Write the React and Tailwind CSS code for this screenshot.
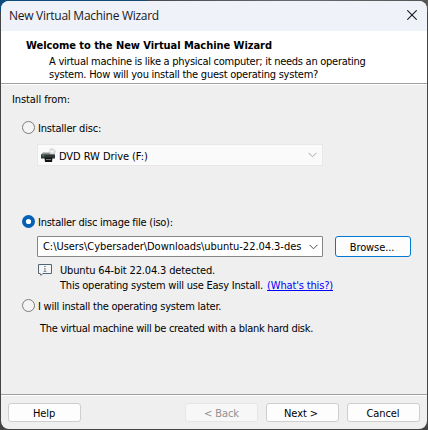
import React from "react";

function Radio({ checked }) {
  return (
    <svg className="mr-[3px] block h-[13px] w-[13px] shrink-0" viewBox="0 0 13 13">
      {checked ? (
        <>
          <circle cx="6.5" cy="6.5" r="6.5" fill="#0560b6" />
          <circle cx="6.5" cy="6.5" r="2.6" fill="#fff" />
        </>
      ) : (
        <circle cx="6.5" cy="6.5" r="6" fill="#f4f4f4" stroke="#7c7c7c" />
      )}
    </svg>
  );
}

function Chevron({ color }) {
  return (
    <svg className="block h-[6px] w-[9px] shrink-0" viewBox="0 0 9 6">
      <path d="M.5 .8L4.5 4.8L8.5 .8" fill="none" stroke={color} strokeWidth="1" />
    </svg>
  );
}

function DriveIcon() {
  return (
    <svg className="block h-[15px] w-[15px] shrink-0" viewBox="0 0 15 15">
      <circle cx="11.2" cy="3.8" r="3.5" fill="#d5d9db" />
      <path d="M8 2.5L11.2 3.8L13.5 1.2" fill="none" stroke="#f1f4f5" strokeWidth="1.2" />
      <circle cx="11.2" cy="3.8" r=".9" fill="#fff" />
      <path d="M2 4.5H8L10 6.5H14V8H0V6.5z" fill="#8b8e8f" />
      <rect y="6.5" width="14" height="4" rx=".6" fill="#303434" />
      <rect x="1.5" y="7" width="1.6" height="1.5" fill="#28a839" />
      <path d="M3.5 9.5H11.5L11 14H4z" fill="#111415" />
      <path d="M5 11.5H10" stroke="#737878" strokeWidth="1" />
    </svg>
  );
}

function InfoIcon() {
  return (
    <svg className="block h-[13px] w-[14px] shrink-0" viewBox="0 0 14 13">
      <path d="M.5 .5H13.5V9.5H4.8L3 11.4L2.2 9.5H.5z" fill="#f3f5f6" stroke="#536675" />
      <path d="M6 2.5H8M6 4.5H7M7 4V7.5M5.5 7.5H8.5" fill="none" stroke="#8c979e" strokeWidth="1.2" />
    </svg>
  );
}

function Button({ className = "", children }) {
  return (
    <button
      className={
        "flex shrink-0 items-center justify-center rounded-[3px] border pt-[2px] whitespace-pre tracking-[-0.1px] " +
        className
      }
    >
      {children}
    </button>
  );
}

export default function App() {
  return (
    <div className="h-[430px] w-[428px] overflow-hidden bg-[#444444] bg-[linear-gradient(90deg,#0d4a7d_0px,#174a73_145px,#484850_150px,#6a6a70_300px,#555555_428px)] bg-[length:428px_12px] bg-no-repeat p-px font-['DejaVu_Sans_Condensed','DejaVu_Sans',sans-serif] text-[11px] leading-[13px] text-black [font-stretch:condensed]">
      <div className="flex h-[428px] w-[426px] flex-col overflow-hidden rounded-[8px] bg-[#efefef] whitespace-nowrap">
        <header className="flex h-[30px] shrink-0 items-center justify-between bg-[#f0f2f9] pr-[10px] pb-[2px] pl-2">
          <span className="font-['Open_Sans',sans-serif] text-[12px] tracking-[-0.28px] text-[#191919] [font-stretch:normal]">
            New Virtual Machine Wizard
          </span>
          <svg className="block h-[10px] w-[10px]" viewBox="0 0 10 10">
            <path d="M.3 .3L9.7 9.7M9.7 .3L.3 9.7" stroke="#1b1b1b" strokeWidth="1.1" />
          </svg>
        </header>
        <section className="h-[52px] shrink-0 bg-white pt-[8px] pl-[25px]">
          <h1 className="font-bold tracking-[-0.05px]">Welcome to the New Virtual Machine Wizard</h1>
          <p className="mt-[3px] pl-[23px]">
            <span className="tracking-[-0.265px]">A virtual machine is like a physical computer; it needs an operating</span>
            <br />
            <span className="tracking-[-0.24px]">system. How will you install the guest operating system?</span>
          </p>
        </section>
        <div className="h-[2px] shrink-0 border-t border-[#a0a0a0] bg-white" />

        <main className="flex h-[309px] shrink-0 flex-col">
          <p className="mt-2 ml-[11px] tracking-[-0.1px]">Install from:</p>
          <label className="mt-[15px] ml-[21px] flex h-[13px] items-center">
            <Radio />
            <span className="pt-[2px] tracking-[-0.2px]">Installer disc:</span>
          </label>
          <div className="mt-[10px] ml-9 flex h-[22px] w-[286px] items-center border border-[#e8e8e8] bg-[#fafafa] pr-[5px] pl-[3px]">
            <DriveIcon />
            <span className="ml-[3px] grow pt-[2px] tracking-[-0.06px]">DVD RW Drive (F:)</span>
            <Chevron color="#a7a7a7" />
          </div>
          <label className="mt-[49px] ml-[21px] flex h-[13px] items-center">
            <Radio checked />
            <span className="pt-[2px] tracking-[-0.26px]">Installer disc image file (iso):</span>
          </label>
          <div className="mt-2 ml-9 flex h-[21px]">
            <div className="flex w-[286px] items-center rounded-[1px] border border-[#868686] bg-white pr-1 pl-[5px]">
              <span className="w-[259px] overflow-hidden tracking-[-0.04px]">
                C:\Users\Cybersader\Downloads\ubuntu-22.04.3-des
              </span>
              <span className="ml-auto">
                <Chevron color="#505050" />
              </span>
            </div>
            <Button className="ml-3 w-[76px] border-[#0078d4] bg-[#fdfdfd] pr-[2px]">Browse...</Button>
          </div>
          <div className="mt-[6px] ml-[37px] flex h-[30px] pt-px">
            <InfoIcon />
            <div className="-mt-px ml-2 leading-[15px]">
              <p className="tracking-[-0.15px]">Ubuntu 64-bit 22.04.3 detected.</p>
              <p>
                <span className="tracking-[-0.22px]">This operating system will use Easy Install.</span>
                <a className="ml-1 tracking-[-0.15px] text-[#0000ff] underline">(What's this?)</a>
              </p>
            </div>
          </div>
          <label className="mt-[6px] ml-[21px] flex h-[13px] items-center">
            <Radio />
            <span className="pt-[2px] tracking-[-0.22px]">I will install the operating system later.</span>
          </label>
          <p className="mt-[10px] ml-[39px] tracking-[-0.29px]">The virtual machine will be created with a blank hard disk.</p>
        </main>
        <div className="h-[2px] shrink-0 border-t border-[#a0a0a0] bg-white" />
        <footer className="flex h-[33px] shrink-0 items-start pt-[7px] pl-[7px]">
          <Button className="h-[19px] w-[73px] border-[#cecece] bg-[#fdfdfd] pr-px">Help</Button>
          <Button className="ml-[104px] h-[19px] w-[73px] border-[#e6e6e6] bg-[#f7f7f7] text-[#909090]">{"< Back"}</Button>
          <Button className="ml-2 h-[19px] w-[73px] border-[#cecece] bg-[#fdfdfd] pr-[3px]">{"Next >"}</Button>
          <Button className="ml-2 h-[19px] w-[73px] border-[#cecece] bg-[#fdfdfd] pr-px">Cancel</Button>
        </footer>
      </div>
    </div>
  );
}
